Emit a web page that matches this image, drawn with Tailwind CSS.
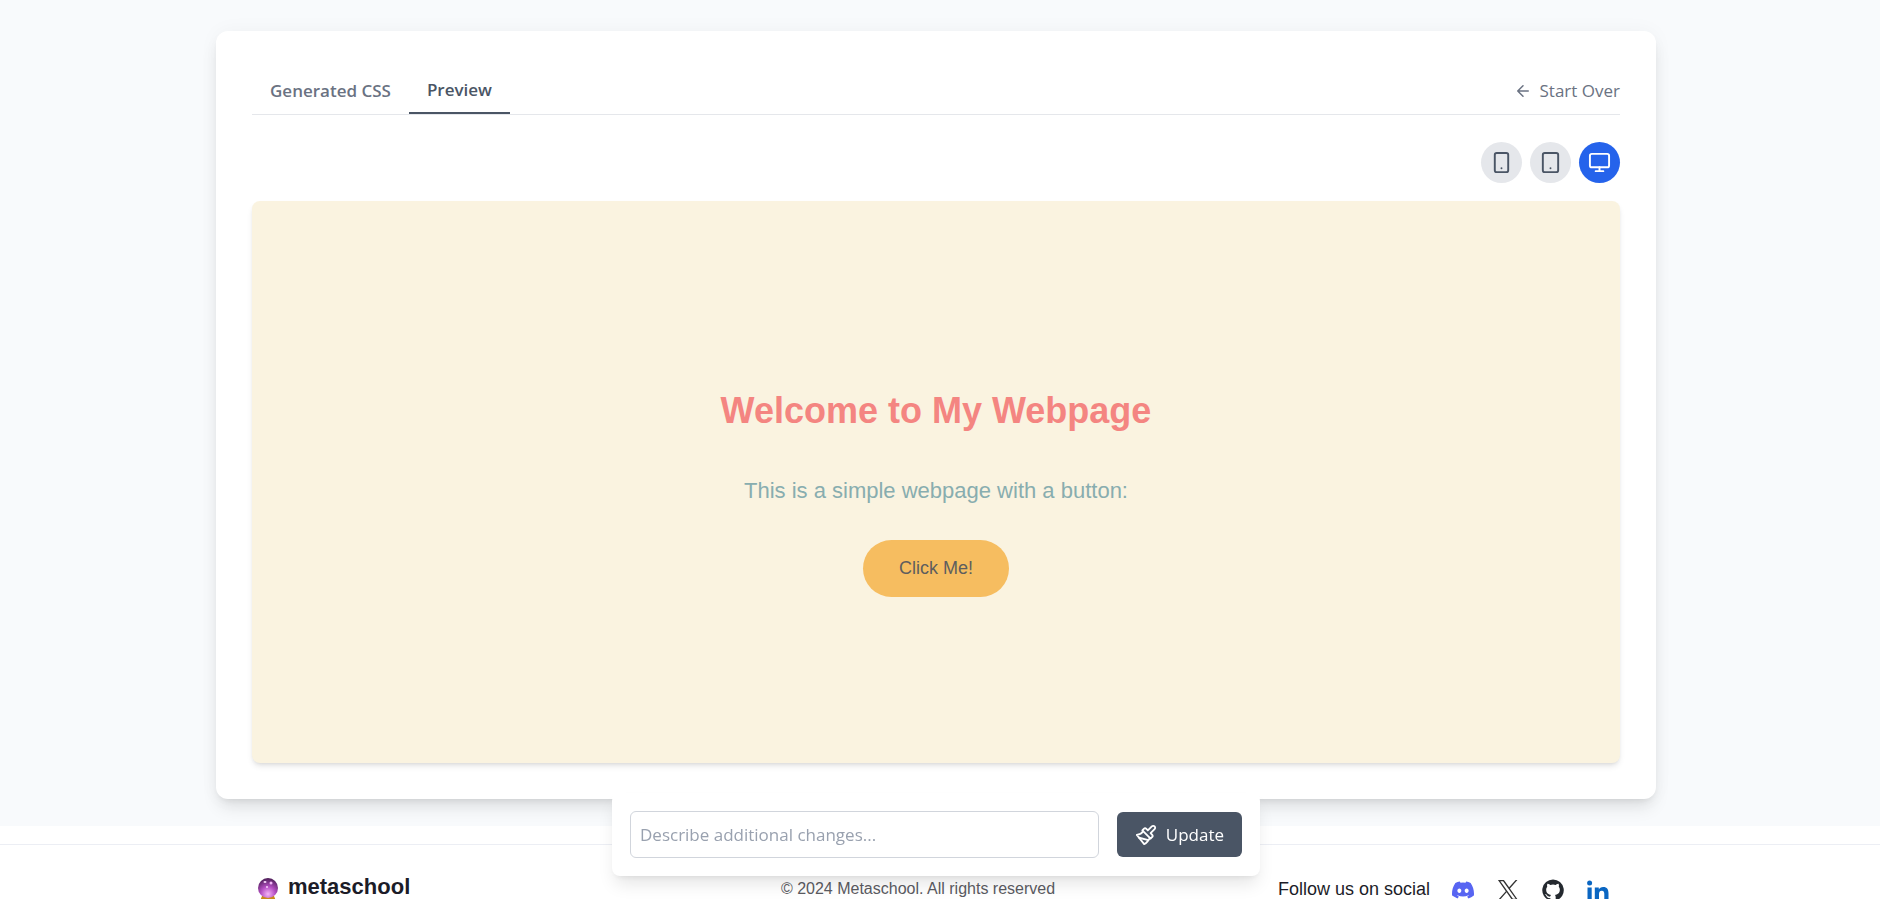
<!DOCTYPE html>
<html lang="en">
<head>
<meta charset="utf-8">
<meta name="viewport" content="width=device-width, initial-scale=1">
<title>Preview</title>
<script src="https://cdn.jsdelivr.net/npm/@tailwindcss/browser@4"></script>
</head>
<body class="flex h-screen flex-col overflow-hidden bg-white font-['Open_Sans','Noto_Sans',sans-serif] text-[17px] leading-6 text-[#4b5563]">
<main class="shrink-0 bg-[#f8fafc] pt-[31px] pr-11 pb-[27px] pl-9">
  <section class="mx-auto max-w-[1440px] rounded-xl bg-white p-9 shadow-[0_11px_17px_-3px_rgb(0_0_0/0.1),0_4px_7px_-4px_rgb(0_0_0/0.1),0_0_20px_rgb(0_0_0/0.04)]">
    <div class="flex items-stretch justify-between border-b border-gray-200">
      <div class="flex" role="tablist">
        <button role="tab" aria-selected="false" class="h-[47px] px-[18px] pt-px font-semibold text-gray-500">Generated CSS</button>
        <button role="tab" aria-selected="true" class="h-[47px] border-b-2 border-gray-600 px-[18px] font-semibold text-gray-600">Preview</button>
      </div>
      <button class="flex items-center gap-2 text-gray-500">
        <svg class="size-[18px]" viewBox="0 0 24 24" fill="none" stroke="currentColor" stroke-width="2" stroke-linecap="round" stroke-linejoin="round" aria-hidden="true"><path d="m12 19-7-7 7-7M19 12H5"/></svg>
        Start Over
      </button>
    </div>
    <div class="mt-[27px] flex justify-end gap-2">
      <button aria-label="Mobile" class="flex size-[41px] items-center justify-center rounded-full bg-gray-200 text-gray-600">
        <svg class="size-[23px]" viewBox="0 0 24 24" fill="none" stroke="currentColor" stroke-width="2" stroke-linecap="round" stroke-linejoin="round"><rect x="5" y="2" width="14" height="20" rx="2"/><path d="M12 18h.01"/></svg>
      </button>
      <button aria-label="Tablet" class="flex size-[41px] items-center justify-center rounded-full bg-gray-200 text-gray-600">
        <svg class="size-[23px]" viewBox="0 0 24 24" fill="none" stroke="currentColor" stroke-width="2" stroke-linecap="round" stroke-linejoin="round"><rect x="4" y="2" width="16" height="20" rx="2"/><path d="M12 18h.01"/></svg>
      </button>
      <button aria-label="Desktop" class="flex size-[41px] items-center justify-center rounded-full bg-[#2563eb] text-white">
        <svg class="size-[23px]" viewBox="0 0 24 24" fill="none" stroke="currentColor" stroke-width="2" stroke-linecap="round" stroke-linejoin="round"><rect x="2" y="3" width="20" height="14" rx="2"/><path d="M8 21h8M12 17v4"/></svg>
      </button>
    </div>
    <div class="mt-[18px] flex h-[562px] flex-col items-center justify-center rounded-lg bg-[#faf3e0] pt-6 font-['Liberation_Sans',Arial,sans-serif] shadow-md">
      <h1 class="text-4xl font-bold text-[#f48581]">Welcome to My Webpage</h1>
      <p class="mt-11 text-[22px] leading-8 text-[#88adaf]">This is a simple webpage with a button:</p>
      <button class="mt-[33px] rounded-full bg-[#f6bd60] px-9 py-4 text-lg leading-[25px] text-[#5e5e5e]">Click Me!</button>
    </div>
  </section>
</main>
<footer class="mt-[18px] shrink-0 border-t border-[#eceef4] pr-11 pl-9 font-['Liberation_Sans',Arial,sans-serif]">
  <div class="mx-auto grid max-w-[1368px] grid-cols-3 items-start pt-[30px] text-lg leading-5 text-[#1c1c28]">
    <a href="#" class="flex items-start gap-2 pl-1 text-[22px] leading-6 font-bold">
      <svg class="mt-0.5 size-6" viewBox="0 0 24 24" aria-hidden="true">
        <defs><radialGradient id="orb" cx=".5" cy=".8" r=".8"><stop offset="0" stop-color="#f5b4f8"/><stop offset=".45" stop-color="#b54fc4"/><stop offset="1" stop-color="#4b1c55"/></radialGradient></defs>
        <path d="M6 19h12l2 5H4z" fill="#c98a1b"/><circle cx="12" cy="11" r="10" fill="url(#orb)"/><ellipse cx="9" cy="5" rx="1.500" ry="1" fill="#f7d5fa"/><circle cx="15" cy="6" r="1.500" fill="#f3b9f7"/><circle cx="11" cy="10" r="1" fill="#f7d5fa"/>
      </svg>
      metaschool
    </a>
    <p class="mt-1 pr-9 text-center text-base leading-5 text-[#5b5b62]">© 2024 Metaschool. All rights reserved</p>
    <div class="mt-1 flex items-start justify-end gap-[21px] pr-[10px]">
      <span>Follow us on social</span>
      <a href="#" aria-label="Discord" class="flex w-6 justify-center"><svg class="size-[22px]" viewBox="0 0 24 24" fill="#5865f2"><path d="M20.317 4.370a19.791 19.791 0 0 0-4.885-1.515.074.074 0 0 0-.079.037c-.211.375-.445.865-.608 1.250a18.270 18.270 0 0 0-5.487 0 12.640 12.640 0 0 0-.617-1.250.077.077 0 0 0-.079-.037A19.736 19.736 0 0 0 3.677 4.370a.07.07 0 0 0-.032.027C.533 9.046-.320 13.580.099 18.058a.082.082 0 0 0 .031.056 19.900 19.900 0 0 0 5.993 3.030.078.078 0 0 0 .084-.028c.462-.630.874-1.295 1.226-1.994a.076.076 0 0 0-.041-.106 13.107 13.107 0 0 1-1.872-.892.077.077 0 0 1-.008-.128c.126-.094.252-.192.372-.291a.074.074 0 0 1 .077-.010c3.928 1.793 8.180 1.793 12.062 0a.074.074 0 0 1 .078.009c.120.099.246.198.373.292a.077.077 0 0 1-.006.128 12.299 12.299 0 0 1-1.873.891.077.077 0 0 0-.041.107c.360.698.772 1.362 1.225 1.993a.076.076 0 0 0 .084.028 19.839 19.839 0 0 0 6.002-3.030.077.077 0 0 0 .032-.054c.500-5.177-.838-9.674-3.549-13.660a.061.061 0 0 0-.031-.030zM8.020 15.330c-1.183 0-2.157-1.085-2.157-2.419 0-1.333.956-2.419 2.157-2.419 1.210 0 2.176 1.096 2.157 2.420 0 1.333-.956 2.418-2.157 2.418zm7.975 0c-1.183 0-2.157-1.085-2.157-2.419 0-1.333.955-2.419 2.157-2.419 1.210 0 2.176 1.096 2.157 2.420 0 1.333-.946 2.418-2.157 2.418z"/></svg></a>
      <a href="#" aria-label="X" class="flex w-6 justify-center"><svg class="size-[22px]" viewBox="0 0 24 24" fill="#333"><path d="M14.100 10.320 22.280 1h-1.940l-7.100 8.090L7.560 1H1.020l8.580 12.230L1.020 23h1.940l7.500-8.540 5.990 8.540h6.540zM3.660 2.430h2.980l13.700 19.210h-2.980z"/></svg></a>
      <a href="#" aria-label="GitHub" class="flex w-6 justify-center"><svg class="size-[22px]" viewBox="0 0 24 24" fill="#24292f"><path d="M12 .5A11.700 11.700 0 0 0 8.300 23.300c.58.100.8-.26.800-.57v-1.990c-3.250.7-3.950-1.570-3.950-1.570-.53-1.360-1.300-1.710-1.300-1.710-1.060-.73.080-.71.080-.71 1.170.080 1.790 1.210 1.790 1.210 1.050 1.790 2.750 1.270 3.410.970.100-.76.400-1.270.750-1.560-2.600-.3-5.340-1.310-5.340-5.790 0-1.270.46-2.320 1.200-3.140-.12-.3-.52-1.490.110-3.100 0 0 .98-.32 3.220 1.200a11 11 0 0 1 5.860 0c2.240-1.520 3.220-1.200 3.220-1.200.63 1.610.24 2.800.12 3.100.75.820 1.200 1.860 1.200 3.140 0 4.490-2.740 5.480-5.350 5.770.42.360.8 1.080.8 2.170v3.220c0 .31.210.68.810.57A11.700 11.700 0 0 0 12 .5z"/></svg></a>
      <a href="#" aria-label="LinkedIn" class="flex w-6 justify-center"><svg class="size-6" viewBox="0 0 24 24" fill="#0a66c2"><circle cx="3.600" cy="4" r="2.500"/><path d="M1.500 8.500h4.200V23H1.500zM8.800 8.500h4v2c.7-1.300 2.200-2.400 4.300-2.400 4.200 0 5.400 2.700 5.400 6.500V23h-4.200v-7.500c0-1.900-.2-3.700-2.500-3.700s-2.800 1.700-2.800 3.600V23H8.800z"/></svg></a>
    </div>
  </div>
</footer>
<form class="fixed right-2 bottom-[23px] left-0 mx-auto flex w-[648px] max-w-full items-center gap-[18px] rounded-lg bg-white p-[18px] shadow-[0_11px_17px_-3px_rgb(0_0_0/0.1),0_4px_7px_-4px_rgb(0_0_0/0.1)]">
  <input type="text" aria-label="Additional changes" placeholder="Describe additional changes..." class="h-[47px] min-w-0 flex-1 rounded-md border border-gray-300 px-[9px] placeholder:text-gray-400">
  <button type="button" class="flex h-[45px] items-center gap-[9px] rounded-md bg-gray-600 px-[18px] text-white">
    <svg class="size-[22px]" viewBox="0 0 24 24" fill="none" stroke="currentColor" stroke-width="2" stroke-linecap="round" stroke-linejoin="round" aria-hidden="true"><path d="M18.370 2.630 14 7l-1.590-1.590a2 2 0 0 0-2.820 0L8 7l9 9 1.590-1.590a2 2 0 0 0 0-2.820L17 10l4.370-4.370a2.120 2.120 0 1 0-3-3Z"/><path d="M9 8c-2 3-4 3.500-7 4l8 10c2-1 6-5 6-7"/><path d="M14.500 17.500 4.500 15"/></svg>
    Update
  </button>
</form>
</body>
</html>
